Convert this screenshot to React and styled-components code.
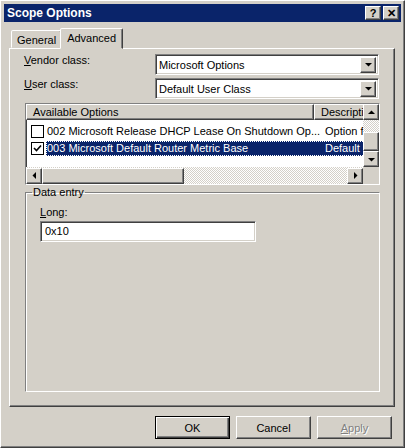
import React from "react";
import styled, { createGlobalStyle } from "styled-components";

const G = createGlobalStyle`
  html,body{margin:0;padding:0;background:#d4d0c8;}
  *{box-sizing:border-box;}
  body{font-family:"Liberation Sans",Arial,sans-serif;font-size:11px;color:#000;}
`;
const raised = `border:1px solid;border-color:#fff #404040 #404040 #fff;box-shadow:inset -1px -1px #808080, inset 1px 1px #d4d0c8;`;
const sunken = `border:1px solid;border-color:#808080 #fff #fff #808080;box-shadow:inset 1px 1px #404040, inset -1px -1px #d4d0c8;`;

const Win = styled.div`width:405px;height:448px;background:#d4d0c8;${raised}padding:3px;display:flex;flex-direction:column;`;
const Title = styled.div`height:18px;background:#0a246a;color:#fff;font-weight:bold;font-size:12px;display:flex;align-items:center;padding:0 2px 0 3px;`;
const TTxt = styled.div`flex:1;`;
const TBtn = styled.div`width:16px;height:14px;background:#d4d0c8;${raised}color:#000;font-weight:bold;font-size:11px;display:flex;align-items:center;justify-content:center;margin-left:2px;line-height:1;`;
const Body = styled.div`flex:1;padding:6px 6px 0 5px;display:flex;flex-direction:column;`;
const Tabs = styled.div`display:flex;align-items:flex-end;height:20px;padding-left:2px;position:relative;z-index:1;`;
const Tab = styled.div`
  border:1px solid;border-color:#fff #404040 transparent #fff;box-shadow:inset -1px 0 #808080;
  border-radius:2px 2px 0 0;background:#d4d0c8;
  padding:${p=>p.$sel?"3px 6px 4px":"3px 5px 1px"};
  height:${p=>p.$sel?"21px":"18px"};margin-bottom:${p=>p.$sel?"-1px":"0"};
  ${p=>p.$sel?"margin-left:-2px;":""}
`;
const Panel = styled.div`height:359px;${raised}padding:5px 15px 0 14px;display:flex;flex-direction:column;`;
const FRow = styled.div`display:flex;align-items:center;height:21px;margin-bottom:3px;`;
const Lbl = styled.div`width:131px;align-self:flex-start;`;
const Combo = styled.div`width:224px;height:21px;background:#fff;${sunken}display:flex;align-items:center;padding:0 2px 0 3px;`;
const CTxt = styled.div`flex:1;`;
const Arrow = styled.div`width:16px;height:16px;background:#d4d0c8;${raised}display:flex;align-items:center;justify-content:center;`;
const Tri = ({d="down"}) => (
  <svg width="7" height="7" viewBox="0 0 7 7">
    {d==="down"&&<path d="M0 2h7L3.5 5.5z" fill="#000"/>}
    {d==="up"&&<path d="M0 5h7L3.5 1.5z" fill="#000"/>}
    {d==="left"&&<path d="M5 0v7L1.5 3.5z" fill="#000"/>}
    {d==="right"&&<path d="M2 0v7L5.5 3.5z" fill="#000"/>}
  </svg>
);
const List = styled.div`width:355px;height:82px;margin-top:1px;margin-left:1px;${sunken}background:#fff;display:grid;grid-template-columns:1fr 16px;grid-template-rows:63px 17px;`;
const Content = styled.div`overflow:hidden;display:flex;flex-direction:column;`;
const Head = styled.div`display:flex;height:16px;`;
const HCell = styled.div`width:${p=>p.$w}px;flex:none;background:#d4d0c8;${raised}padding:1px 0 0 6px;white-space:nowrap;overflow:hidden;`;
const Row = styled.div`display:flex;align-items:center;height:16px;margin-top:${p=>p.$mt||0}px;padding-left:5px;white-space:nowrap;`;
const Check = styled.div`width:13px;height:13px;border:1px solid #000;background:#fff;flex:none;margin-right:2px;display:flex;align-items:center;justify-content:center;`;
const RText = styled.div`display:flex;${p=>p.$sel?"background:#0a246a;color:#fff;outline:1px dotted #fff;outline-offset:-1px;":""}height:15px;align-items:center;`;
const C1 = styled.div`width:275px;padding-left:1px;overflow:hidden;`;
const C2 = styled.div`width:60px;padding-left:4px;overflow:hidden;`;
const VScroll = styled.div`background:repeating-conic-gradient(#d4d0c8 0 25%,#fff 0 50%) 0 0/2px 2px;display:flex;flex-direction:column;`;
const SB = styled.div`width:16px;height:16px;flex:none;background:#d4d0c8;${raised}display:flex;align-items:center;justify-content:center;`;
const Thumb = styled.div`background:#d4d0c8;${raised}${p=>p.$h?`height:16px;width:${p.$h}px;`:`width:16px;height:${p.$v}px;`}`;
const HScroll = styled.div`background:repeating-conic-gradient(#d4d0c8 0 25%,#fff 0 50%) 0 0/2px 2px;display:flex;align-items:center;`;
const Corner = styled.div`background:#d4d0c8;`;
const Group = styled.fieldset`margin:1px 0 0 1px;width:355px;height:206px;border:1px solid;border-color:#808080 #fff #fff #808080;box-shadow:inset 1px 1px #fff, 1px 1px #808080 inset;padding:8px 0 0 14px;
  legend{padding:0 1px;margin-left:-8px;}
`;
const Input = styled.div`width:216px;height:21px;background:#fff;${sunken}padding:3px 4px;margin-top:3px;`;
const Buttons = styled.div`display:flex;justify-content:flex-end;gap:6px;padding:9px 3px 0 0;`;
const Btn = styled.div`width:75px;height:23px;background:#d4d0c8;display:flex;align-items:center;justify-content:center;
  ${p=>p.$def?"border:1px solid #000;box-shadow:inset 1px 1px #fff, inset -1px -1px #404040, inset -2px -2px #808080;":raised}
  ${p=>p.$dis?"color:#808080;text-shadow:1px 1px #fff;":""}`;

export default function App(){
  return (<>
    <G/>
    <Win>
      <Title><TTxt>Scope Options</TTxt><TBtn>?</TBtn><TBtn>✕</TBtn></Title>
      <Body>
        <Tabs><Tab>General</Tab><Tab $sel>Advanced</Tab></Tabs>
        <Panel>
          <FRow><Lbl><u>V</u>endor class:</Lbl><Combo><CTxt>Microsoft Options</CTxt><Arrow><Tri/></Arrow></Combo></FRow>
          <FRow><Lbl><u>U</u>ser class:</Lbl><Combo><CTxt>Default User Class</CTxt><Arrow><Tri/></Arrow></Combo></FRow>
          <List>
            <Content>
              <Head><HCell $w={288}>Available Options</HCell><HCell $w={60}>Description</HCell></Head>
              <Row $mt={3}><Check/><RText><C1>002 Microsoft Release DHCP Lease On Shutdown Op...</C1><C2>Option for Microsoft</C2></RText></Row>
              <Row $mt={1}><Check><svg width="9" height="9" viewBox="0 0 9 9"><path d="M1 4l2.5 2.5L8 1.5" stroke="#000" strokeWidth="1.6" fill="none"/></svg></Check><RText $sel><C1>003 Microsoft Default Router Metric Base</C1><C2>Default Router</C2></RText></Row>
            </Content>
            <VScroll><SB><Tri d="up"/></SB><div style={{height:12}}/><Thumb $v={19}/><div style={{flex:1}}/><SB><Tri d="down"/></SB></VScroll>
            <HScroll><SB><Tri d="left"/></SB><Thumb $h={142}/><div style={{flex:1}}/><SB><Tri d="right"/></SB></HScroll>
            <Corner/>
          </List>
          <Group><legend>Data entry</legend>
            <div><u>L</u>ong:</div>
            <Input>0x10</Input>
          </Group>
        </Panel>
        <Buttons><Btn $def>OK</Btn><Btn>Cancel</Btn><Btn $dis><u>A</u>pply</Btn></Buttons>
      </Body>
    </Win>
  </>);
}
